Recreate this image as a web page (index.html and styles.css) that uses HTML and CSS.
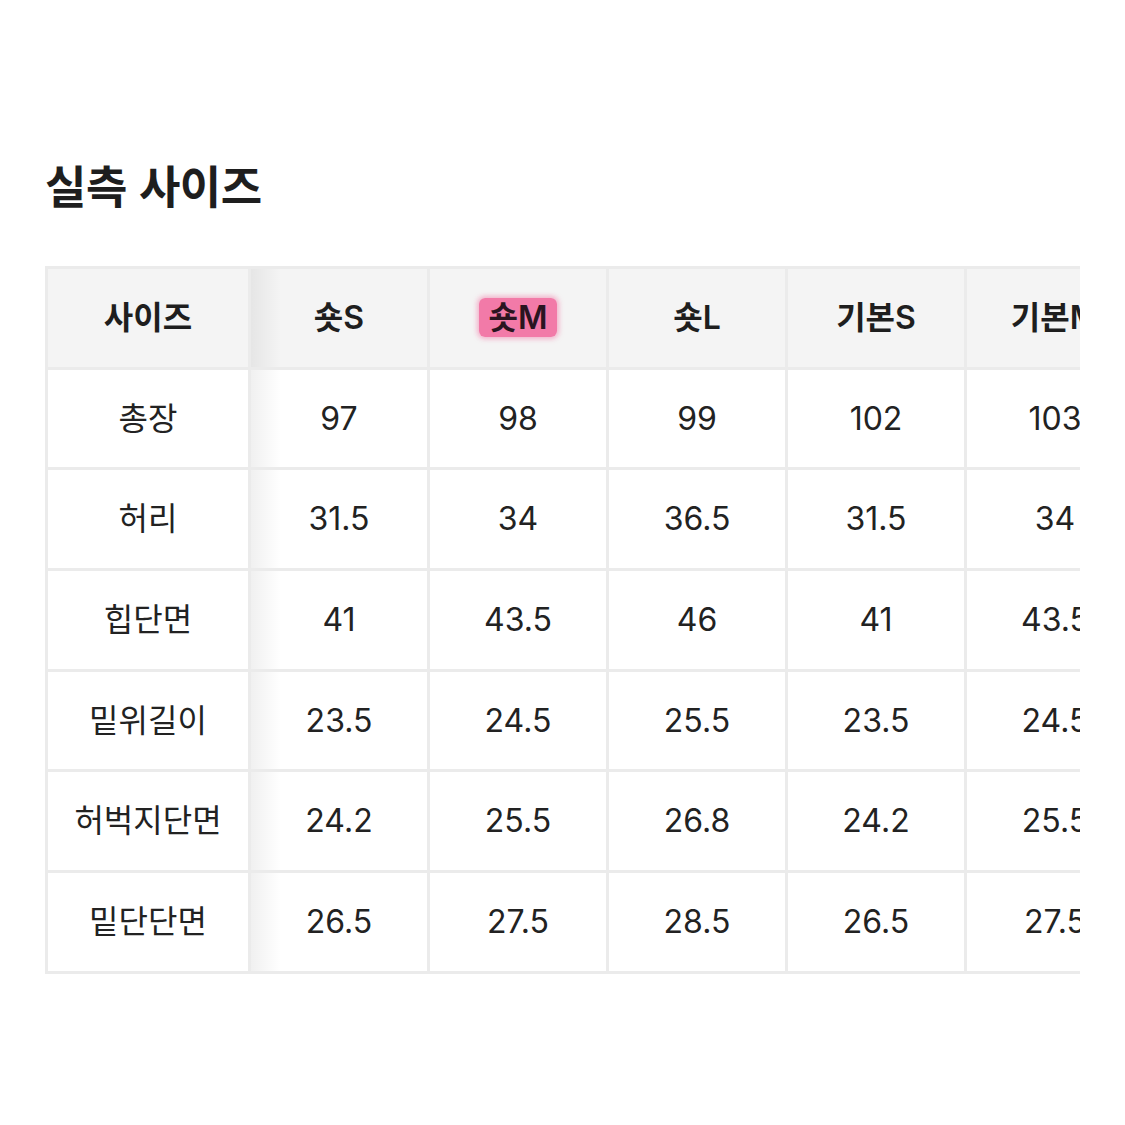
FILE: index.html
```html
<!DOCTYPE html>
<html lang="ko">
<head>
<meta charset="utf-8">
<link rel="stylesheet" href="styles.css">
</head>
<body>
<div class="page">
  <h1 class="title">실측 사이즈</h1>
  <div class="scroller">
    <table class="sizes">
      <thead>
        <tr>
          <th class="first">사이즈</th>
          <th>숏S</th>
          <th><span class="hl">숏M</span></th>
          <th>숏L</th>
          <th>기본S</th>
          <th>기본M</th>
          <th>기본L</th>
        </tr>
      </thead>
      <tbody>
        <tr><td class="first">총장</td><td>97</td><td>98</td><td>99</td><td>102</td><td>103</td><td>104</td></tr>
        <tr><td class="first">허리</td><td>31.5</td><td>34</td><td>36.5</td><td>31.5</td><td>34</td><td>36.5</td></tr>
        <tr><td class="first">힙단면</td><td>41</td><td>43.5</td><td>46</td><td>41</td><td>43.5</td><td>46</td></tr>
        <tr><td class="first">밑위길이</td><td>23.5</td><td>24.5</td><td>25.5</td><td>23.5</td><td>24.5</td><td>25.5</td></tr>
        <tr><td class="first">허벅지단면</td><td>24.2</td><td>25.5</td><td>26.8</td><td>24.2</td><td>25.5</td><td>26.8</td></tr>
        <tr><td class="first">밑단단면</td><td>26.5</td><td>27.5</td><td>28.5</td><td>26.5</td><td>27.5</td><td>28.5</td></tr>
      </tbody>
    </table>
  </div>
</div>
</body>
</html>
```
FILE: styles.css
```css
html, body {
  margin: 0;
  padding: 0;
  background: #ffffff;
}
body {
  font-family: "Inter", "Noto Sans CJK KR", "Noto Sans", sans-serif;
  color: #222222;
}
.page {
  padding: 150px 45px 0 45px;
}
.title {
  margin: 0;
  font-family: "Noto Sans CJK KR", sans-serif;
  font-size: 45px;
  font-weight: 700;
  line-height: 70px;
  color: #1e1e1e;
  letter-spacing: -0.5px;
}
.scroller {
  margin-top: 46px;
  width: 1035px;
  overflow: hidden;
}
.sizes {
  border-collapse: collapse;
  table-layout: fixed;
  width: 1263px;
}
.sizes th, .sizes td {
  border: 3px solid #ebebeb;
  height: 97.7px;
  padding: 0;
  line-height: 40px;
  text-align: center;
  vertical-align: middle;
  font-size: 32px;
  white-space: nowrap;
  position: relative;
}
.sizes th {
  background: #f4f4f4;
  font-weight: 600;
  color: #1e1e1e;
}
.sizes td {
  font-weight: 400;
  color: #222222;
}
.sizes .first {
  width: 200px;
}
.sizes th:not(.first), .sizes td:not(.first) {
  width: 176px;
}
.sizes .first::after {
  content: "";
  position: absolute;
  top: 0;
  bottom: 0;
  right: -33px;
  width: 30px;
  background: linear-gradient(to right, rgba(0,0,0,0.06), rgba(0,0,0,0));
  z-index: 1;
  pointer-events: none;
}
.hl {
  background: #f27aa8;
  border-radius: 6px;
  padding: 0 10px;
  box-shadow: 0 0 5px 2px rgba(242,122,168,0.55);
  color: #2a1420;
}
```
